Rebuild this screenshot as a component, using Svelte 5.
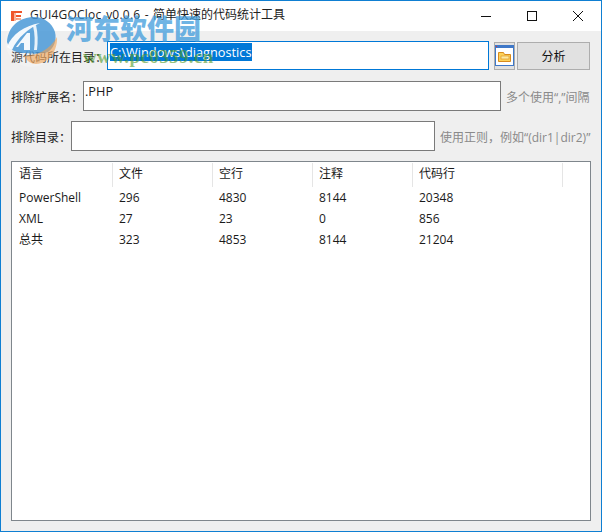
<script>
  const columns = [
    { title: '语言', width: 101 },
    { title: '文件', width: 100 },
    { title: '空行', width: 100 },
    { title: '注释', width: 100 },
    { title: '代码行', width: 150 }
  ];
  const rows = [
    ['PowerShell', '296', '4830', '8144', '20348'],
    ['XML', '27', '23', '0', '856'],
    ['总共', '323', '4853', '8144', '21204']
  ];
</script>

<div class="window">
  <header class="titlebar">
    <svg class="appicon" width="12" height="10" viewBox="0 0 12 10">
      <rect x="0" y="0" width="3" height="10" fill="#f0562a"/>
      <rect x="3" y="0" width="8" height="2" fill="#f0562a"/>
      <rect x="5" y="4" width="5" height="2" fill="#f0562a"/>
      <rect x="5" y="7" width="5" height="2" fill="#f59a78"/>
      <rect x="3" y="2" width="2" height="8" fill="#f8b49c"/>
    </svg>
    <span class="title"><span class="latin">GUI4GOCloc v0.0.6</span> - 简单快速的代码统计工具</span>
    <div class="controls">
      <svg class="ctl" width="46" height="30" viewBox="0 0 46 30"><path d="M18 15.5h10" stroke="#111" fill="none"/></svg>
      <svg class="ctl" width="46" height="30" viewBox="0 0 46 30"><rect x="18.5" y="10.5" width="9" height="9" stroke="#111" fill="none"/></svg>
      <svg class="ctl" width="46" height="30" viewBox="0 0 46 30"><path d="M18 10l10 10M28 10l-10 10" stroke="#111" fill="none"/></svg>
    </div>
  </header>

  <main class="body">
    <div class="row first">
      <label class="label">源代码所在目录：</label>
      <div class="input active"><span class="selected">C:\Windows\diagnostics</span></div>
      <button class="folder" aria-label="选择目录">
        <svg width="19" height="21" viewBox="0 0 19 21">
          <rect x="0.5" y="0.5" width="18" height="20" fill="#fff" stroke="#3f78c8"/>
          <rect x="0" y="0" width="19" height="3" fill="#3f78c8"/>
          <rect x="1" y="1" width="1" height="1" fill="#e03030"/>
          <path d="M3.5 16.5V7.5h5l1 2h6v7z" fill="#fcd25a" stroke="#d98a1c"/>
          <rect x="6" y="11" width="8" height="3" fill="#fdeaa0" stroke="#d98a1c" stroke-width="0.6"/>
        </svg>
      </button>
      <button class="analyze">分析</button>
    </div>

    <div class="row second">
      <label class="label">排除扩展名：</label>
      <div class="input ext">.PHP</div>
      <span class="hint">多个使用“,”间隔</span>
    </div>

    <div class="row third">
      <label class="label">排除目录：</label>
      <div class="input dir"></div>
      <span class="hint">使用正则，例如“(dir1|dir2)”</span>
    </div>

    <section class="list">
      <div class="head">
        {#each columns as c}
          <div class="hcell" style="width:{c.width}px">{c.title}</div>
        {/each}
      </div>
      {#each rows as r}
        <div class="datarow">
          {#each r as v, i}
            <div class="cell" style="width:{columns[i].width}px">{v}</div>
          {/each}
        </div>
      {/each}
    </section>
  </main>

  <div class="watermark" aria-hidden="true">
    <svg class="wm-logo" width="70" height="60" viewBox="0 0 70 60">
      <circle cx="31" cy="27" r="26" fill="#ffffff" opacity="0.2"/>
      <path d="M7 28C8 12 20 3 34 3c10 0 18 6 21 15 2 8-1 16-7 20-6 2-14 2-22 1-8 0-16-1-19-11z" fill="#3f92d4" opacity="0.8"/>
      <path d="M7 33C12 20 24 12 40 9 28 15 18 23 12 36z" fill="#ffffff" opacity="0.92"/>
      <path d="M16 33l11-14h3v17h-6V29h-3l-3 4z" fill="#ffffff" opacity="0.92"/>
      <path d="M33 12c2 8 2 16 1 24l3 0c1-8 1-17-1-25z" fill="#ffffff" opacity="0.85"/>
      <path d="M24 42C36 42 50 36 57 23c1 13-8 27-21 27-5 0-9-3-12-8z" fill="#f0a050" opacity="0.6"/>
    </svg>
    <span class="wm-cn">河东软件园</span>
    <span class="wm-url">www.pc0359.cn</span>
  </div>
</div>

<style>
  :global(body) { margin: 0; }
  .window {
    position: relative;
    box-sizing: border-box;
    width: 602px;
    height: 532px;
    border: 1px solid #0f7fd2;
    background: #efefef;
    overflow: hidden;
    font-family: "Open Sans", "Noto Sans CJK SC", sans-serif;
    font-size: 12px;
    color: #1a1a1a;
  }
  .titlebar {
    display: flex;
    align-items: center;
    height: 30px;
    background: #fff;
    padding-left: 10px;
  }
  .appicon { margin-right: 7px; margin-top: -1px; }
  .title { font-size: 12px; line-height: 16px; margin-top: -2px; color: #222; flex: 1; word-spacing: 1.3px; }
  .latin { letter-spacing: 0.22px; }
  .controls { display: flex; }
  .ctl { display: block; }
  .body { display: flex; flex-direction: column; padding: 0 10px; }
  .row { display: flex; align-items: center; }
  .first { margin-top: 10px; height: 29px; }
  .second { margin-top: 11px; height: 30px; }
  .third { margin-top: 10px; height: 30px; }
  .label { white-space: nowrap; color: #222; padding-top: 2px; }
  .first .label { width: 96px; flex: none; }
  .second .label { width: 72px; flex: none; }
  .third .label { width: 60px; flex: none; }
  .input {
    box-sizing: border-box;
    height: 100%;
    background: #fff;
    border: 1px solid #7a7a7a;
    padding: 1px 1px 0;
    line-height: 17px;
    font-size: 12.75px;
  }
  .active { width: 382px; border-color: #0078d7; padding: 1px 2px; }
  .selected { display: inline-block; background: #0078d7; color: #fff; line-height: 18px; }
  .ext { width: 418px; }
  .dir { width: 364px; }
  .folder {
    box-sizing: border-box;
    width: 21px;
    height: 28px;
    margin: 0 0 0 5px;
    padding: 0;
    display: flex;
    align-items: center;
    justify-content: center;
    background: #e1e1e1;
    border: 1px solid #adadad;
  }
  .analyze {
    box-sizing: border-box;
    width: 73px;
    height: 28px;
    margin: 0 0 0 2px;
    padding: 0;
    background: #e1e1e1;
    border: 1px solid #adadad;
    font: inherit;
    color: #111;
  }
  .hint { margin-left: 5px; padding-top: 2px; color: #8a8a8a; white-space: nowrap; }
  .list {
    box-sizing: border-box;
    width: 580px;
    height: 360px;
    margin-top: 10px;
    background: #fff;
    border: 1px solid #7f868c;
  }
  .head { display: flex; height: 24px; padding-top: 1px; }
  .hcell {
    box-sizing: border-box;
    height: 24px;
    line-height: 22px;
    padding-left: 6px;
    border-right: 1px solid #e5e5e5;
    color: #1a1a1a;
  }
  .hcell:first-child, .cell:first-child { padding-left: 7px; }
  .datarow { display: flex; height: 21px; line-height: 21px; }
  .cell { box-sizing: border-box; padding-left: 6px; color: #1a1a1a; }
  .watermark {
    position: absolute;
    inset: 0;
    pointer-events: none;
  }
  .wm-logo { position: absolute; left: -1px; top: 13px; }
  .wm-cn {
    position: absolute;
    left: 65px;
    top: 11px;
    font-family: "Noto Sans CJK SC", serif;
    font-weight: 900;
    font-size: 27px;
    line-height: 32px;
    color: #3f9bdc;
    opacity: 0.75;
  }
  .wm-url {
    position: absolute;
    left: 82px;
    top: 46px;
    font-family: "Liberation Serif", serif;
    font-weight: 700;
    font-size: 19px;
    line-height: 20px;
    letter-spacing: 0.4px;
    color: #4f9a2a;
    opacity: 0.6;
  }
</style>
